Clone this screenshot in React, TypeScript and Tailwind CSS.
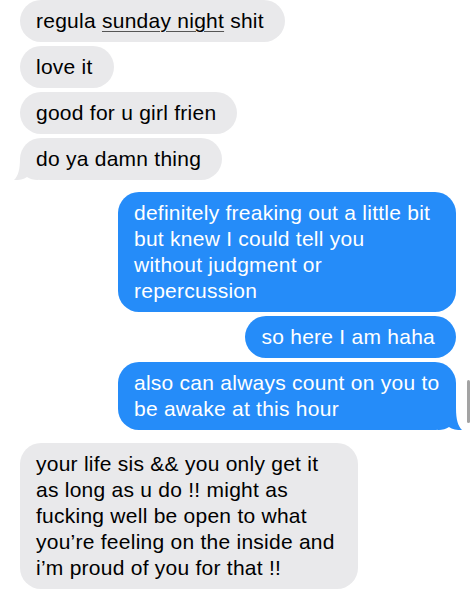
const font = { fontFamily: '"Liberation Sans", Arial, sans-serif' };

type Side = "in" | "out";

const Tail = ({ side }: { side: Side }) => (
  <svg
    width="24"
    height="22"
    viewBox="0 0 24 22"
    className={
      side === "in"
        ? "absolute bottom-0 -left-[6px]"
        : "absolute bottom-0 -right-[6px] -scale-x-100"
    }
  >
    <path
      d="M6 0 L24 0 L24 22 C19 22 16 21 13 19 C10 21.5 5 22 0 22 C4 18 6 12 6 0 Z"
      fill={side === "in" ? "#e9e9eb" : "#258cf9"}
    />
  </svg>
);

const Bubble = ({
  side,
  tail,
  wide,
  children,
}: {
  side: Side;
  tail?: boolean;
  wide?: boolean;
  children: React.ReactNode;
}) => (
  <div
    className={`relative rounded-[21px] pl-4 pr-[21px] py-2 text-[21px] leading-[26px] tracking-[0.25px] whitespace-nowrap ${
      side === "in" ? "self-start bg-[#e9e9eb] text-black" : "self-end bg-[#258cf9] text-white"
    } ${wide ? "w-[338px]" : ""}`}
  >
    {tail && <Tail side={side} />}
    <span className="relative">{children}</span>
  </div>
);

export default function App() {
  return (
    <div className="relative h-[593px] w-[474px] overflow-hidden bg-white" style={font}>
      <div className="flex flex-col pl-5 pr-[18px]">
        {/* their messages */}
        <div className="flex flex-col gap-1">
          <Bubble side="in">
            regula{" "}
            <span className="underline decoration-[#555] decoration-1 underline-offset-[3px]">
              sunday night
            </span>{" "}
            shit
          </Bubble>
          <Bubble side="in">love it</Bubble>
          <Bubble side="in">good for u girl frien</Bubble>
          <Bubble side="in" tail>
            do ya damn thing
          </Bubble>
        </div>

        {/* mine */}
        <div className="mt-3 flex flex-col gap-1">
          <Bubble side="out" wide>
            definitely freaking out a little bit
            <br />
            but knew I could tell you
            <br />
            without judgment or
            <br />
            repercussion
          </Bubble>
          <Bubble side="out">so here I am haha</Bubble>
          <Bubble side="out" wide tail>
            also can always count on you to
            <br />
            be awake at this hour
          </Bubble>
        </div>

        <div className="mt-[13px] flex flex-col gap-1">
          <Bubble side="in" wide>
            your life sis &amp;&amp; you only get it
            <br />
            as long as u do !! might as
            <br />
            fucking well be open to what
            <br />
            you’re feeling on the inside and
            <br />
            i’m proud of you for that !!
          </Bubble>
        </div>
      </div>

      {/* scroll indicator */}
      <div className="absolute left-[467px] top-[380px] h-[43px] w-[3px] rounded-full bg-[#a3a3a3]" />
    </div>
  );
}
